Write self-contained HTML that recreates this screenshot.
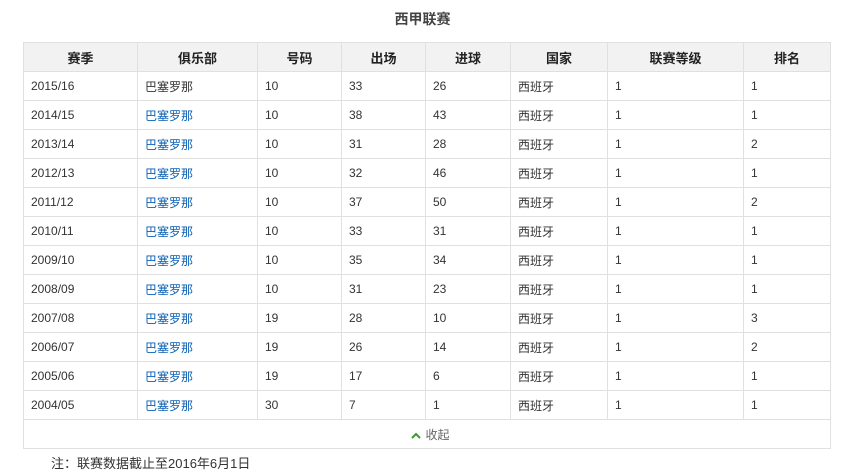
<!DOCTYPE html><html><head><meta charset="utf-8"><style>
body{margin:0;background:#fff;width:845px;height:471px;overflow:hidden;font-family:"Liberation Sans","Noto Sans CJK SC",sans-serif;font-size:12px;color:#333}
h1{position:absolute;top:9px;left:0;width:845px;text-align:center;font-size:14px;font-weight:bold;color:#444;margin:0}
table{position:absolute;left:23px;top:42px;border-collapse:collapse;table-layout:fixed;width:807px}
td,th{border:1px solid #e0e0e0;height:28px;padding:0 0 0 7px;text-align:left;font-weight:normal}
th{background:#f2f2f2;text-align:center;font-weight:bold;padding:0;height:28px;font-size:13px;color:#222}
a{color:#0a5fb4;text-decoration:none}
.f td{text-align:center;color:#666;height:28px}
.note{position:absolute;top:453px;left:51px;font-size:13px;color:#333}
</style></head><body>
<h1>西甲联赛</h1>
<table>
<colgroup><col style="width:114px"><col style="width:120px"><col style="width:84px"><col style="width:84px"><col style="width:85px"><col style="width:97px"><col style="width:136px"><col style="width:87px"></colgroup>
<tr><th>赛季</th><th>俱乐部</th><th>号码</th><th>出场</th><th>进球</th><th>国家</th><th>联赛等级</th><th>排名</th></tr>
<tr><td>2015/16</td><td>巴塞罗那</td><td>10</td><td>33</td><td>26</td><td>西班牙</td><td>1</td><td>1</td></tr>
<tr><td>2014/15</td><td><a>巴塞罗那</a></td><td>10</td><td>38</td><td>43</td><td>西班牙</td><td>1</td><td>1</td></tr>
<tr><td>2013/14</td><td><a>巴塞罗那</a></td><td>10</td><td>31</td><td>28</td><td>西班牙</td><td>1</td><td>2</td></tr>
<tr><td>2012/13</td><td><a>巴塞罗那</a></td><td>10</td><td>32</td><td>46</td><td>西班牙</td><td>1</td><td>1</td></tr>
<tr><td>2011/12</td><td><a>巴塞罗那</a></td><td>10</td><td>37</td><td>50</td><td>西班牙</td><td>1</td><td>2</td></tr>
<tr><td>2010/11</td><td><a>巴塞罗那</a></td><td>10</td><td>33</td><td>31</td><td>西班牙</td><td>1</td><td>1</td></tr>
<tr><td>2009/10</td><td><a>巴塞罗那</a></td><td>10</td><td>35</td><td>34</td><td>西班牙</td><td>1</td><td>1</td></tr>
<tr><td>2008/09</td><td><a>巴塞罗那</a></td><td>10</td><td>31</td><td>23</td><td>西班牙</td><td>1</td><td>1</td></tr>
<tr><td>2007/08</td><td><a>巴塞罗那</a></td><td>19</td><td>28</td><td>10</td><td>西班牙</td><td>1</td><td>3</td></tr>
<tr><td>2006/07</td><td><a>巴塞罗那</a></td><td>19</td><td>26</td><td>14</td><td>西班牙</td><td>1</td><td>2</td></tr>
<tr><td>2005/06</td><td><a>巴塞罗那</a></td><td>19</td><td>17</td><td>6</td><td>西班牙</td><td>1</td><td>1</td></tr>
<tr><td>2004/05</td><td><a>巴塞罗那</a></td><td>30</td><td>7</td><td>1</td><td>西班牙</td><td>1</td><td>1</td></tr>
<tr class="f"><td colspan="8"><svg width="10" height="7" viewBox="0 0 10 7" style="margin-right:4px"><path d="M1 6L5 2L9 6" stroke="#3a9a2a" stroke-width="2" fill="none"/></svg>收起</td></tr>
</table>
<div class="note">注：联赛数据截止至2016年6月1日</div>
</body></html>
